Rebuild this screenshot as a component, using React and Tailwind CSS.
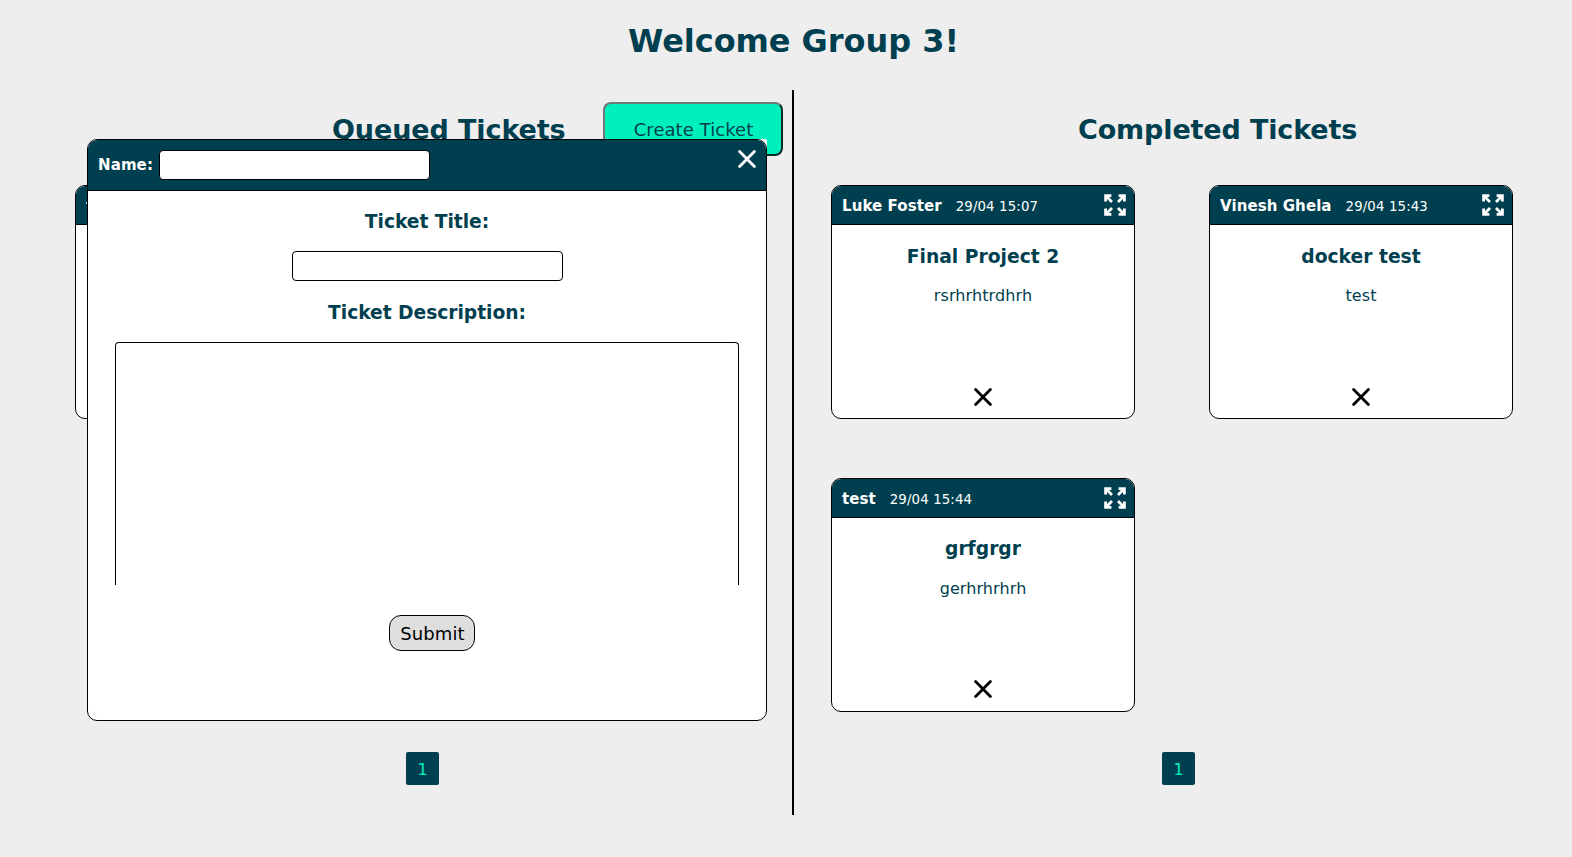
import React from "react";

const ARROW_CORNERS = [
  "matrix(1 0 0 1 0 0)",
  "matrix(-1 0 0 1 22 0)",
  "matrix(1 0 0 -1 0 22)",
  "matrix(-1 0 0 -1 22 22)",
];

function ExpandIcon() {
  return (
    <svg width="22" height="22" viewBox="0 0 22 22" fill="none" stroke="#fff" strokeWidth="2.8">
      {ARROW_CORNERS.map((m) => (
        <path key={m} transform={m} d="M1.6 7.4V1.6H7.4M1.8 1.8L8 8" />
      ))}
    </svg>
  );
}

function CloseIcon() {
  return (
    <svg width="18" height="18" viewBox="0 0 18 18" fill="none" stroke="currentColor" strokeWidth="2.8" strokeLinecap="round">
      <path d="M1.6 1.6L16.4 16.4M16.4 1.6L1.6 16.4" />
    </svg>
  );
}

function Ticket({ name, date, title, text }) {
  return (
    <article className="flex h-[234px] w-[304px] flex-col overflow-hidden rounded-[10px] border border-black bg-white">
      <header className="flex h-[39px] shrink-0 items-center border-b border-black bg-[#003f4f] pl-[10px] pr-2 text-white">
        <b className="mt-[1.9px] text-[15px] leading-5 tracking-[0.08px]">{name}</b>
        <span className="ml-[14px] mt-[3.9px] text-[13.33px] leading-5 tracking-[0.12px]">{date}</span>
        <span className="ml-auto"><ExpandIcon /></span>
      </header>
      <h3 className="mt-[19.7px] text-center text-[18.72px] font-bold leading-6">{title}</h3>
      <p className="mt-[17.6px] text-center text-base leading-5 tracking-[0.1px]">{text}</p>
      <button className="mx-auto mb-[12.3px] mt-auto text-black"><CloseIcon /></button>
    </article>
  );
}

function Page() {
  return (
    <div className="flex size-[33px] items-center justify-center rounded-[2px] bg-[#003f4f] pt-0.5 text-base text-[#00f0bc]">1</div>
  );
}

function TicketForm() {
  return (
    <div className="absolute left-[87px] top-[139px] rounded-[10px] rounded-tr-[2px] bg-white">
      <form className="h-[582px] w-[680px] overflow-hidden rounded-[10px] border border-black bg-white">
        <div className="flex h-[51px] items-center border-b border-black bg-[#003f4f] pl-[10px] pr-[10px] text-white">
          <label className="w-[61px] text-[15px] font-bold tracking-[0.1px]">Name:</label>
          <input className="h-[30px] w-[271px] rounded-[4px] border border-black bg-white text-black" />
          <button type="button" className="mb-3 ml-auto"><CloseIcon /></button>
        </div>
        <div className="flex flex-col items-center">
          <label className="mt-[19px] text-[18.72px] font-bold leading-6 tracking-[-0.05px]">Ticket Title:</label>
          <input className="mt-[17px] h-[30px] w-[271px] rounded-[4px] border border-black" />
          <label className="mt-[20px] text-[18.72px] font-bold leading-6 tracking-[-0.05px]">Ticket Description:</label>
          <div className="mt-[17px] h-[243px] w-[624px] rounded-t-[4px] border border-b-0 border-black" />
          <button type="button" className="ml-[9px] mt-[30px] h-9 w-[86px] rounded-xl border border-black bg-[#dddedd] pl-0.5 text-[18px] tracking-[0.1px] text-black">Submit</button>
        </div>
      </form>
    </div>
  );
}

export default function App() {
  return (
    <div className="relative h-[857px] w-full overflow-hidden bg-[#eee] font-['DejaVu_Sans',sans-serif] text-[#003f4f]">
      <h1 className="h-[90px] pl-[15px] pt-[21px] text-center text-[32px] font-bold leading-10 tracking-[-0.05px]">Welcome Group 3!</h1>
      <main className="flex h-[725px]">
        <section className="flex w-[794px] flex-col border-r-2 border-black pl-[75px]">
          <div className="flex h-[95px] items-start pt-3">
            <h2 className="ml-[257px] mt-[10px] w-[271px] whitespace-nowrap text-[27px] font-bold leading-9 tracking-[-0.1px]">Queued Tickets</h2>
            <button className="h-[54px] w-[180px] rounded-lg border-2 border-b-[#002b26] border-l-[#6f7b7b] border-r-[#002b26] border-t-[#6f7b7b] bg-[#00f0bc] pl-px text-[18px] tracking-[0.06px]">Create Ticket</button>
          </div>
          <Ticket name="test" date="29/04 15:40" title="test" text="test" />
          <div className="mb-[30px] ml-[331px] mt-auto"><Page /></div>
        </section>
        <section className="flex flex-1 flex-col pl-[37px]">
          <h2 className="h-[95px] pl-[247px] pt-[22px] text-[27px] font-bold leading-9 tracking-[-0.14px]">Completed Tickets</h2>
          <div className="grid grid-cols-[304px_304px] gap-x-[74px] gap-y-[58.6px]">
            <Ticket name="Luke Foster" date="29/04 15:07" title="Final Project 2" text="rsrhrhtrdhrh" />
            <Ticket name="Vinesh Ghela" date="29/04 15:43" title="docker test" text="test" />
            <Ticket name="test" date="29/04 15:44" title="grfgrgr" text="gerhrhrhrh" />
          </div>
          <div className="mb-[30px] ml-[331px] mt-auto"><Page /></div>
        </section>
      </main>
      <TicketForm />
    </div>
  );
}
